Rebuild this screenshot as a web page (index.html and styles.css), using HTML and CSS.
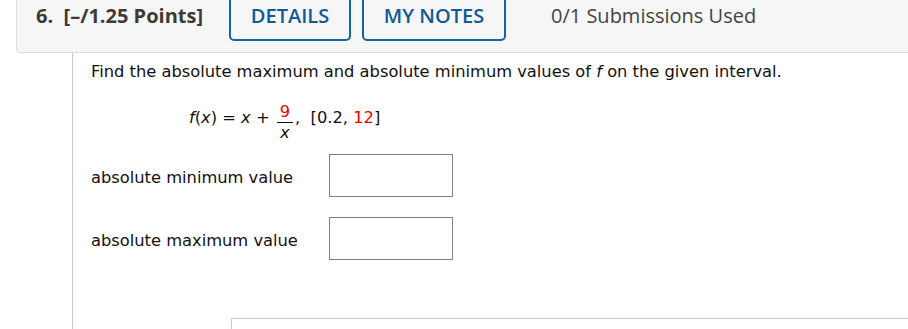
FILE: index.html
```html
<!DOCTYPE html>
<html>
<head>
<meta charset="utf-8">
<link rel="stylesheet" href="styles.css">
</head>
<body>
<div class="header">
  <div class="qnum">6.&nbsp; [–/1.25 Points]</div>
  <div class="btn btn-details">DETAILS</div>
  <div class="btn btn-notes">MY NOTES</div>
  <div class="subs">0/1 Submissions Used</div>
</div>
<div class="content">
  <p class="prompt">Find the absolute maximum and absolute minimum values of <i>f</i> on the given interval.</p>
  <div class="formula">
    <span class="side"><i>f</i>(<i>x</i>) = <i>x</i> + </span>
    <span class="frac"><span class="num red">9</span><span class="den"><i>x</i></span></span>
    <span class="side">,&nbsp; [0.2, <span class="red">12</span>]</span>
  </div>
  <div class="row">
    <span class="label">absolute minimum value</span>
    <span class="box"></span>
  </div>
  <div class="row">
    <span class="label">absolute maximum value</span>
    <span class="box"></span>
  </div>
  <div class="next"></div>
</div>
</body>
</html>
```
FILE: styles.css
```css
html, body {
  margin: 0;
  padding: 0;
  background: #ffffff;
  overflow: hidden;
}
body {
  width: 908px;
  height: 329px;
}
.header {
  margin-left: 16px;
  height: 53px;
  background: #f6f6f6;
  border-left: 1px solid #dcdcdc;
  border-bottom: 1px solid #dcdcdc;
  border-bottom-left-radius: 4px;
  display: flex;
  align-items: flex-start;
  font-family: "Open Sans", sans-serif;
  font-size: 20px;
  box-sizing: border-box;
}
.qnum {
  font-weight: 700;
  color: #3d3a36;
  margin-left: 19px;
  line-height: 32px;
  width: 193px;
}
.btn {
  box-sizing: border-box;
  margin-top: -6px;
  height: 47px;
  border: 2px solid #1565a0;
  border-radius: 5px;
  color: #0f5b96;
  font-weight: 600;
  display: flex;
  justify-content: center;
  align-items: flex-start;
  padding-top: 9px;
  line-height: 22px;
}
.btn-details {
  width: 122px;
}
.btn-notes {
  width: 144px;
  margin-left: 11px;
}
.subs {
  color: #444444;
  margin-left: 45px;
  line-height: 32px;
}
.content {
  margin-left: 72px;
  border-left: 1px solid #cccccc;
  height: 276px;
  overflow: hidden;
  box-sizing: border-box;
  font-family: "DejaVu Sans", Verdana, sans-serif;
  font-size: 16.3px;
  color: #111111;
  padding-left: 18px;
}
.prompt {
  margin: 0;
  padding-top: 9px;
  line-height: 20px;
}
.formula {
  margin-top: 18px;
  margin-left: 98px;
  display: flex;
  align-items: center;
  height: 44px;
  white-space: pre;
}
.side {
  padding-bottom: 9px;
}
.frac {
  display: inline-flex;
  flex-direction: column;
  align-items: center;
  margin: 0 2px;
  line-height: 19px;
}
.frac .num {
  border-bottom: 1px solid #111;
  padding: 0 3px 1px;
}
.red { color: #ee0000; }
.row {
  display: flex;
  align-items: center;
}
.formula + .row { margin-top: 10px; }
.row + .row { margin-top: 20px; }
.label {
  width: 238px;
  padding-top: 3px;
}
.box {
  width: 122px;
  height: 41px;
  border: 1px solid #808080;
}
.next {
  margin-top: 58px;
  margin-left: 140px;
  height: 40px;
  border-top: 1px solid #cccccc;
  border-left: 1px solid #cccccc;
}
```
